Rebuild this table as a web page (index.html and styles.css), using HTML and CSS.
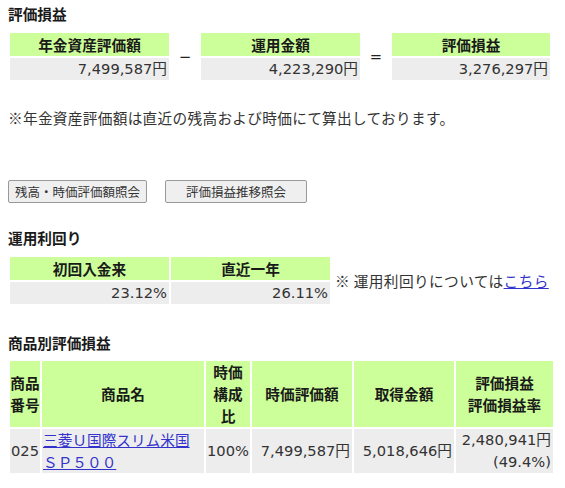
FILE: index.html
```html
<!DOCTYPE html>
<html lang="ja">
<head>
<meta charset="utf-8">
<title>評価損益</title>
<link rel="stylesheet" href="styles.css">
</head>
<body>
<h2 class="title">評価損益</h2>
<table class="calc">
  <colgroup>
    <col class="c-val"><col class="c-op"><col class="c-val"><col class="c-op"><col class="c-last">
  </colgroup>
  <tr>
    <th class="hd">年金資産評価額</th>
    <td class="op" rowspan="2">−</td>
    <th class="hd">運用金額</th>
    <td class="op" rowspan="2">=</td>
    <th class="hd">評価損益</th>
  </tr>
  <tr>
    <td class="val num">7,499,587円</td>
    <td class="val num">4,223,290円</td>
    <td class="val num">3,276,297円</td>
  </tr>
</table>

<p class="note">※年金資産評価額は直近の残高および時価にて算出しております。</p>

<div class="btns">
  <button type="button" class="btn">残高・時価評価額照会</button>
  <button type="button" class="btn btn-wide">評価損益推移照会</button>
</div>

<h2 class="title title-gap">運用利回り</h2>
<div class="yield-row">
  <table class="yield">
    <colgroup><col class="c-val"><col class="c-val"></colgroup>
    <tr>
      <th class="hd">初回入金来</th>
      <th class="hd">直近一年</th>
    </tr>
    <tr>
      <td class="val num">23.12%</td>
      <td class="val num">26.11%</td>
    </tr>
  </table>
  <span class="yield-note">※ 運用利回りについては<a href="#" class="link">こちら</a></span>
</div>

<h2 class="title title-gap3">商品別評価損益</h2>
<table class="prod">
  <colgroup>
    <col class="p1"><col class="p2"><col class="p3"><col class="p4"><col class="p5"><col class="p6">
  </colgroup>
  <tr>
    <th>商品<br>番号</th>
    <th>商品名</th>
    <th>時価<br>構成<br>比</th>
    <th>時価評価額</th>
    <th>取得金額</th>
    <th>評価損益<br>評価損益率</th>
  </tr>
  <tr>
    <td class="num center">025</td>
    <td class="name"><a href="#" class="link">三菱Ｕ国際スリム米国<br>ＳＰ５００</a></td>
    <td class="num center">100%</td>
    <td class="num right">7,499,587円</td>
    <td class="num right">5,018,646円</td>
    <td class="num right">2,480,941円<br>(49.4%)</td>
  </tr>
</table>
</body>
</html>
```

FILE: styles.css
```css
body {
  margin: 0;
  padding: 4px 8px 0;
  font-family: "Noto Sans CJK JP", sans-serif;
  font-size: 11pt;
  color: #333;
  background: #fff;
}

.num {
  font-family: "DejaVu Sans", "Noto Sans CJK JP", sans-serif;
}

.title {
  margin: 0;
  font-size: 11pt;
  font-weight: bold;
  line-height: 20px;
  color: #1a1a1a;
}

.title-gap { margin-top: 25px; }
.title-gap3 { margin-top: 27px; }

table {
  border-collapse: separate;
  border-spacing: 2px;
  table-layout: fixed;
}

.calc {
  width: 544px;
  margin-top: 7px;
}

.c-val { width: 159px; }
.c-op { width: 28px; }
.c-last { width: 158px; }

.hd {
  background: #ccff99;
  color: #1a1a1a;
  font-weight: bold;
  text-align: center;
  height: 23px;
  line-height: 23px;
  padding: 0 3px;
}

.val {
  background: #ededed;
  text-align: right;
  height: 22px;
  line-height: 22px;
  padding: 0 2px;
}

.op {
  font-family: "DejaVu Sans", sans-serif;
  text-align: center;
  vertical-align: middle;
  padding: 0;
  color: #222;
}

.note {
  margin: 26px 0 0;
  line-height: 20px;
  letter-spacing: 0.3px;
}

.btns {
  display: flex;
  gap: 18px;
  margin-top: 52px;
}

.btn {
  font-family: "Noto Sans CJK JP", sans-serif;
  font-size: 12.5px;
  height: 23px;
  padding: 0 6px;
  background: #efefef;
  border: 1px solid #999;
  border-radius: 2px;
  color: #333;
}

.btn-wide { padding: 0 20px; }

.yield-row {
  display: flex;
  align-items: center;
  gap: 3px;
  margin-top: 7px;
}

.yield { width: 324px; }

.yield-note {
  white-space: nowrap;
  letter-spacing: 0.4px;
}

.link {
  color: #3333cc;
  text-decoration: underline;
}

.prod {
  width: 547px;
  margin-top: 6px;
}

.p1 { width: 30px; }
.p2 { width: 162px; }
.p3 { width: 44px; }
.p4 { width: 100px; }
.p5 { width: 100px; }
.p6 { width: 97px; }

.prod th {
  background: #ccff99;
  color: #1a1a1a;
  font-weight: bold;
  text-align: center;
  vertical-align: middle;
  line-height: 22px;
  padding: 0;
  white-space: nowrap;
}

.prod td {
  background: #ededed;
  line-height: 22px;
  padding: 0 2px;
  vertical-align: middle;
  white-space: nowrap;
}

.prod td.center { text-align: center; padding: 0; }
.prod td.right { text-align: right; }
.prod td.name { text-align: left; padding: 0 1px; }
```
